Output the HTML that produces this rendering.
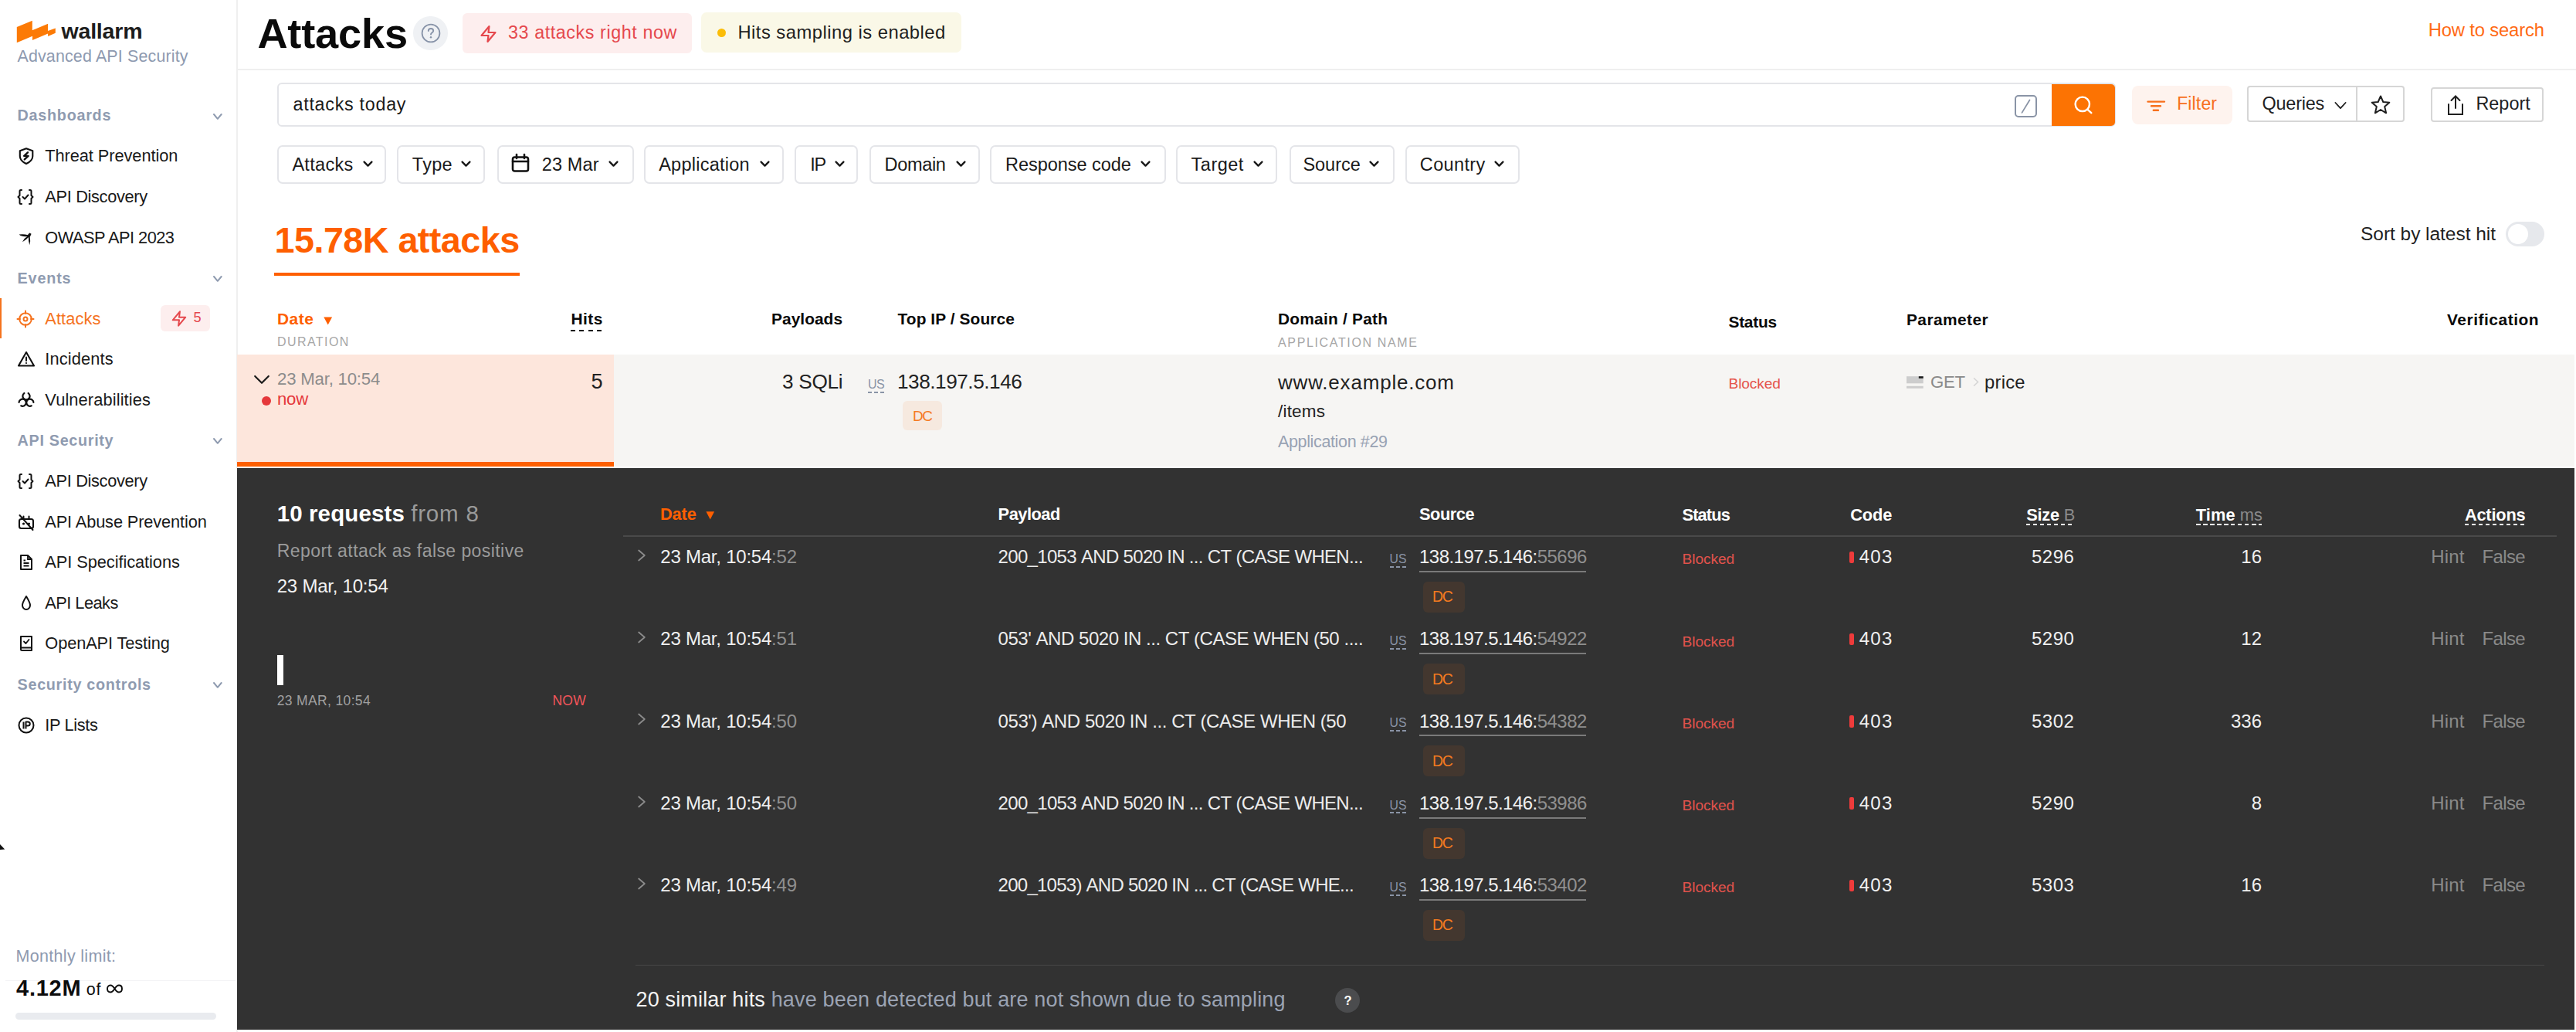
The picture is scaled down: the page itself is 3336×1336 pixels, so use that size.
<!DOCTYPE html>
<html><head><meta charset="utf-8"><title>Attacks</title>
<style>
html,body{margin:0;padding:0;}
body{width:3336px;height:1336px;position:relative;overflow:hidden;background:#ffffff;font-family:"Liberation Sans",sans-serif;}
.t{position:absolute;line-height:1;white-space:nowrap;}
.r{position:absolute;display:block;}
</style></head><body>
<div class="r" style="left:0.0px;top:0.0px;width:306.0px;height:1336.0px;background:#ffffff;"></div>
<div class="r" style="left:306.0px;top:0.0px;width:1.5px;height:1336.0px;background:#efefef;"></div>
<div class="r" style="left:307.0px;top:89.0px;width:3029.0px;height:1.5px;background:#efefef;"></div>
<svg class="r" style="left:20.0px;top:25.0px;" width="54.0" height="32.0" viewBox="0 0 54 32" fill="none"><polygon fill="#fc7a05" points="1.8,10.1 21.8,1.8 21.8,14.2 42.1,5.7 42.1,15 51.8,11.5 51.8,17.7 42.1,21.9 42.1,18.4 22,27 22,21.7 1.8,30.3"/></svg>
<div class="t" id="t0" style="left:79.5px;top:26.3px;font-size:28.5px;color:#1d1d1d;font-weight:700;letter-spacing:-0.190px;">wallarm</div>
<div class="t" id="t1" style="left:22.5px;top:62.5px;font-size:21.4px;color:#8e9ab0;letter-spacing:0.170px;">Advanced API Security</div>
<div class="t" id="t2" style="left:22.6px;top:140.4px;font-size:19.8px;color:#8f9bb0;font-weight:700;letter-spacing:0.719px;">Dashboards</div>
<svg class="r" style="left:275.4px;top:145.5px;" width="13.7" height="9.8" viewBox="0 0 13.7 9.8" fill="none"><polyline points="2,2 6.85,7.8 11.7,2" stroke="#8f9bb0" stroke-width="2" stroke-linecap="round" stroke-linejoin="round"/></svg>
<div class="t" id="t3" style="left:22.6px;top:350.8px;font-size:19.8px;color:#8f9bb0;font-weight:700;letter-spacing:0.824px;">Events</div>
<svg class="r" style="left:275.4px;top:355.9px;" width="13.7" height="9.8" viewBox="0 0 13.7 9.8" fill="none"><polyline points="2,2 6.85,7.8 11.7,2" stroke="#8f9bb0" stroke-width="2" stroke-linecap="round" stroke-linejoin="round"/></svg>
<div class="t" id="t4" style="left:22.6px;top:561.2px;font-size:19.8px;color:#8f9bb0;font-weight:700;letter-spacing:0.678px;">API Security</div>
<svg class="r" style="left:275.4px;top:566.2px;" width="13.7" height="9.8" viewBox="0 0 13.7 9.8" fill="none"><polyline points="2,2 6.85,7.8 11.7,2" stroke="#8f9bb0" stroke-width="2" stroke-linecap="round" stroke-linejoin="round"/></svg>
<div class="t" id="t5" style="left:22.6px;top:876.7px;font-size:19.8px;color:#8f9bb0;font-weight:700;letter-spacing:0.682px;">Security controls</div>
<svg class="r" style="left:275.4px;top:881.8px;" width="13.7" height="9.8" viewBox="0 0 13.7 9.8" fill="none"><polyline points="2,2 6.85,7.8 11.7,2" stroke="#8f9bb0" stroke-width="2" stroke-linecap="round" stroke-linejoin="round"/></svg>
<div class="t" id="t6" style="left:58.3px;top:191.3px;font-size:21.8px;color:#1a1a1a;letter-spacing:-0.073px;">Threat Prevention</div>
<div class="t" id="t7" style="left:58.3px;top:243.9px;font-size:21.8px;color:#1a1a1a;letter-spacing:-0.340px;">API Discovery</div>
<div class="t" id="t8" style="left:58.3px;top:296.5px;font-size:21.8px;color:#1a1a1a;letter-spacing:-0.522px;">OWASP API 2023</div>
<div class="t" id="t9" style="left:58.3px;top:401.7px;font-size:21.8px;color:#f5731e;letter-spacing:0.087px;">Attacks</div>
<div class="t" id="t10" style="left:58.3px;top:454.3px;font-size:21.8px;color:#1a1a1a;letter-spacing:0.144px;">Incidents</div>
<div class="t" id="t11" style="left:58.3px;top:506.9px;font-size:21.8px;color:#1a1a1a;letter-spacing:0.121px;">Vulnerabilities</div>
<div class="t" id="t12" style="left:58.3px;top:612.1px;font-size:21.8px;color:#1a1a1a;letter-spacing:-0.340px;">API Discovery</div>
<div class="t" id="t13" style="left:58.3px;top:664.6px;font-size:21.8px;color:#1a1a1a;letter-spacing:-0.135px;">API Abuse Prevention</div>
<div class="t" id="t14" style="left:58.3px;top:717.2px;font-size:21.8px;color:#1a1a1a;letter-spacing:-0.064px;">API Specifications</div>
<div class="t" id="t15" style="left:58.3px;top:769.8px;font-size:21.8px;color:#1a1a1a;letter-spacing:-0.545px;">API Leaks</div>
<div class="t" id="t16" style="left:58.3px;top:822.4px;font-size:21.8px;color:#1a1a1a;letter-spacing:-0.113px;">OpenAPI Testing</div>
<div class="t" id="t17" style="left:58.3px;top:927.6px;font-size:21.8px;color:#1a1a1a;letter-spacing:-0.353px;">IP Lists</div>
<div class="r" style="left:0.0px;top:385.9px;width:1.5px;height:52.2px;background:#f5731e;"></div>
<div class="r" style="left:208.0px;top:394.7px;width:63.8px;height:34.4px;background:#fdeeee;border-radius:6px;"></div>
<svg class="r" style="left:220.5px;top:400.5px;" width="22.0" height="23.0" viewBox="0 0 24 24" fill="none"><path d="M13 2 L3 14 H12 L11 22 L21 10 H12 Z" stroke="#e5484d" stroke-width="2.2" stroke-linejoin="round"/></svg>
<div class="t" id="t18" style="left:250.4px;top:402.3px;font-size:18.2px;color:#e5484d;">5</div>
<svg class="r" style="left:21.5px;top:190.3px;" width="24.0" height="24.0" viewBox="0 0 24 24" fill="none"><path d="M12 2.3 L20.3 5.3 V12.3 C20.3 16.8 16.8 19.8 12 22 C7.2 19.8 3.8 16.8 3.8 12.3 V5.3 Z" stroke="#111" stroke-width="2.1" stroke-linejoin="round"/><path d="M14 7.3 L9.2 11.9 H14.6 L9.8 16.4" stroke="#111" stroke-width="2.4" stroke-linecap="round" stroke-linejoin="round"/></svg>
<svg class="r" style="left:21.0px;top:242.9px;" width="24.0" height="24.0" viewBox="0 0 24 24" fill="none"><path d="M7 3 H6 C5 3 4.5 3.5 4.5 4.5 V10 L2.5 12 L4.5 14 V19.5 C4.5 20.5 5 21 6 21 H7 M17 3 H18 C19 3 19.5 3.5 19.5 4.5 V10 L21.5 12 L19.5 14 V19.5 C19.5 20.5 19 21 18 21 H17" stroke="#111" stroke-width="2" stroke-linecap="round" stroke-linejoin="round"/><path d="M8.5 12 L11 14.5 L15.5 9.5" stroke="#111" stroke-width="2" stroke-linecap="round" stroke-linejoin="round"/></svg>
<svg class="r" style="left:21.0px;top:611.0px;" width="24.0" height="24.0" viewBox="0 0 24 24" fill="none"><path d="M7 3 H6 C5 3 4.5 3.5 4.5 4.5 V10 L2.5 12 L4.5 14 V19.5 C4.5 20.5 5 21 6 21 H7 M17 3 H18 C19 3 19.5 3.5 19.5 4.5 V10 L21.5 12 L19.5 14 V19.5 C19.5 20.5 19 21 18 21 H17" stroke="#111" stroke-width="2" stroke-linecap="round" stroke-linejoin="round"/><path d="M8.5 12 L11 14.5 L15.5 9.5" stroke="#111" stroke-width="2" stroke-linecap="round" stroke-linejoin="round"/></svg>
<svg class="r" style="left:21.0px;top:295.5px;" width="24.0" height="24.0" viewBox="0 0 24 24" fill="none"><g fill="#111"><path d="M15.3 8.2 Q9.5 6.6 3.6 7.5 Q7.5 11.2 15.3 10 Z"/><path d="M15.2 9.2 Q10.5 12 8 17.2 Q13 14.8 16.5 10.6 Z"/><path d="M15.8 10 Q15.6 16 17.3 21.2 Q18.8 15.5 17.6 10 Z"/><path d="M14.8 8.3 L17.2 5.6 L19.6 6.8 L17.9 10.4 L15.2 10.4 Z"/></g></svg>
<svg class="r" style="left:21.3px;top:400.7px;" width="24.0" height="24.0" viewBox="0 0 24 24" fill="none"><circle cx="12" cy="12" r="7.8" stroke="#f5731e" stroke-width="2"/><circle cx="12" cy="12" r="2.5" stroke="#f5731e" stroke-width="2"/><path d="M12 1.5 V5 M12 19 V22.5 M1.5 12 H5 M19 12 H22.5" stroke="#f5731e" stroke-width="2" stroke-linecap="round"/></svg>
<svg class="r" style="left:21.5px;top:453.2px;" width="24.0" height="24.0" viewBox="0 0 24 24" fill="none"><path d="M12 3 L22 20.5 H2 Z" stroke="#111" stroke-width="2.1" stroke-linejoin="round"/><path d="M12 9.5 V14" stroke="#111" stroke-width="2" stroke-linecap="round"/><circle cx="12" cy="17" r="1.1" fill="#111"/></svg>
<svg class="r" style="left:21.5px;top:505.8px;" width="24.0" height="24.0" viewBox="0 0 24 24" fill="none"><g stroke="#111" stroke-width="2.2" stroke-linecap="round"><path d="M14.64 3.03 A4.6 4.6 0 1 1 9.36 3.03"/><path d="M14.64 3.03 A4.6 4.6 0 1 1 9.36 3.03" transform="rotate(120 12 12.4)"/><path d="M14.64 3.03 A4.6 4.6 0 1 1 9.36 3.03" transform="rotate(240 12 12.4)"/></g></svg>
<svg class="r" style="left:21.5px;top:663.6px;" width="24.0" height="24.0" viewBox="0 0 24 24" fill="none"><rect x="3" y="8" width="18" height="12" rx="2.5" stroke="#111" stroke-width="2.1"/><path d="M8.5 8 V4.5 M15.5 8 V4.5 M3.5 3 L20.5 22" stroke="#111" stroke-width="2" stroke-linecap="round"/><circle cx="8.5" cy="14" r="1.6" fill="#111"/><circle cx="15.5" cy="14" r="1.6" fill="#111"/></svg>
<svg class="r" style="left:22.0px;top:716.2px;" width="24.0" height="24.0" viewBox="0 0 24 24" fill="none"><path d="M5 3 H14 L19 8 V21 H5 Z" stroke="#111" stroke-width="2" stroke-linejoin="round"/><path d="M14 3 V8 H19 M8.5 13 H15.5 M8.5 16.5 H15.5 M8.5 9.5 H11" stroke="#111" stroke-width="1.8"/></svg>
<svg class="r" style="left:21.5px;top:768.8px;" width="24.0" height="24.0" viewBox="0 0 24 24" fill="none"><path d="M12 3 C9 8 7 11 7 14.5 C7 17.5 9.2 20 12 20 C14.8 20 17 17.5 17 14.5 C17 11 15 8 12 3 Z" stroke="#111" stroke-width="2" stroke-linejoin="round"/></svg>
<svg class="r" style="left:22.0px;top:821.4px;" width="24.0" height="24.0" viewBox="0 0 24 24" fill="none"><path d="M5 3 H19 V21 H6.5 C5.5 21 5 20.5 5 19.5 Z M5 17.5 H19" stroke="#111" stroke-width="2" stroke-linejoin="round"/><path d="M9 9.5 L11.5 12 L15.5 7" stroke="#111" stroke-width="1.8" stroke-linecap="round" stroke-linejoin="round"/></svg>
<svg class="r" style="left:21.5px;top:926.5px;" width="24.0" height="24.0" viewBox="0 0 24 24" fill="none"><circle cx="12" cy="12" r="9.5" stroke="#111" stroke-width="2"/><path d="M8.5 7.5 V16.5 M11.5 16.5 V7.5 H14 C15.8 7.5 16.8 8.6 16.8 10 C16.8 11.5 15.8 12.5 14 12.5 H11.5" stroke="#111" stroke-width="2" stroke-linejoin="round"/></svg>
<div class="t" id="t19" style="left:20.5px;top:1227.8px;font-size:21.5px;color:#8e9ab0;letter-spacing:0.312px;">Monthly limit:</div>
<div class="r" style="left:6.5px;top:1269.3px;width:298.0px;height:1.0px;background:#f3f3f5;"></div>
<div class="t" id="t20" style="left:21.0px;top:1264.5px;font-size:29.0px;color:#0d0d0d;font-weight:700;letter-spacing:0.748px;">4.12M</div>
<div class="t" id="t21" style="left:111.7px;top:1270.8px;font-size:21.5px;color:#0d0d0d;letter-spacing:0.957px;">of</div>
<svg class="r" style="left:137.0px;top:1272.0px;" width="23.0" height="16.0" viewBox="0 0 23 16" fill="none"><path d="M11.5 8 C9 4 7.5 3.5 6 3.5 C3.5 3.5 2 5.5 2 8 C2 10.5 3.5 12.5 6 12.5 C7.5 12.5 9 12 11.5 8 C14 4 15.5 3.5 17 3.5 C19.5 3.5 21 5.5 21 8 C21 10.5 19.5 12.5 17 12.5 C15.5 12.5 14 12 11.5 8 Z" stroke="#0d0d0d" stroke-width="1.9"/></svg>
<div class="r" style="left:20.0px;top:1311.0px;width:260.0px;height:9.0px;background:#e9ebef;border-radius:5px;"></div>
<svg class="r" style="left:0.0px;top:1090.0px;" width="8.0" height="12.0" viewBox="0 0 8 12" fill="none"><path d="M0 3 L6.2 9.6 L0 9.9 Z" fill="#111"/></svg>
<div class="t" id="t22" style="left:333.4px;top:16.1px;font-size:54.2px;color:#0a0a0a;font-weight:700;letter-spacing:-0.164px;">Attacks</div>
<div class="r" style="left:535.3px;top:20.8px;width:44.4px;height:44.4px;background:#eff1f4;border-radius:50%;"></div>
<svg class="r" style="left:543.5px;top:29.0px;" width="28.0" height="28.0" viewBox="0 0 28 28" fill="none"><circle cx="14" cy="14" r="11.4" stroke="#8793a8" stroke-width="1.8"/><path d="M10.8 11 C10.8 9 12.3 8 14 8 C15.8 8 17.2 9.2 17.2 10.9 C17.2 13.2 14 13.4 14 15.6" stroke="#8793a8" stroke-width="1.9" stroke-linecap="round"/><circle cx="14" cy="19.3" r="1.2" fill="#8793a8"/></svg>
<div class="r" style="left:599.0px;top:17.0px;width:296.6px;height:51.5px;background:#fdeeee;border-radius:6px;"></div>
<svg class="r" style="left:619.5px;top:31.5px;" width="25.0" height="24.0" viewBox="0 0 24 24" fill="none"><path d="M13 2 L3 14 H12 L11 22 L21 10 H12 Z" stroke="#e5484d" stroke-width="2.2" stroke-linejoin="round"/></svg>
<div class="t" id="t23" style="left:658.0px;top:31.1px;font-size:23.3px;color:#e5484d;letter-spacing:0.584px;">33 attacks right now</div>
<div class="r" style="left:907.8px;top:15.7px;width:336.8px;height:52.8px;background:#faf8e7;border-radius:7px;"></div>
<div class="r" style="left:929.1px;top:37.0px;width:11.0px;height:11.0px;background:#fbbd08;border-radius:50%;"></div>
<div class="t" id="t24" style="left:955.4px;top:29.7px;font-size:23.8px;color:#1e1e1e;letter-spacing:0.477px;">Hits sampling is enabled</div>
<div class="t" id="t25" style="left:3144.7px;top:26.8px;font-size:23.8px;color:#ff6a13;letter-spacing:-0.159px;">How to search</div>
<div class="r" style="left:359.4px;top:107.4px;width:2380.9px;height:56.9px;background:#ffffff;box-sizing:border-box;border:2px solid #e4e5e9;border-radius:6px;"></div>
<div class="t" id="t26" style="left:379.5px;top:124.1px;font-size:23.3px;color:#1a1a1a;letter-spacing:0.727px;">attacks today</div>
<div class="r" style="left:2609.3px;top:123.3px;width:29.1px;height:29.2px;background:none;box-sizing:border-box;border:2px solid #8a94a6;border-radius:5px;"></div>
<svg class="r" style="left:2609.3px;top:123.3px;" width="29.1" height="29.2" viewBox="0 0 29.1 29.2" fill="none"><path d="M19.5 6.5 L9.5 22.9" stroke="#8a94a6" stroke-width="1.8" stroke-linecap="round"/></svg>
<div class="r" style="left:2657.0px;top:109.0px;width:82.0px;height:54.0px;background:#fc7303;border-radius:0 5px 5px 0;"></div>
<svg class="r" style="left:2683.0px;top:121.0px;" width="30.0" height="30.0" viewBox="0 0 30 30" fill="none"><circle cx="13.8" cy="13.8" r="9.2" stroke="#fff" stroke-width="2.4"/><path d="M20.5 20.8 L25.3 25.2" stroke="#fff" stroke-width="2.4" stroke-linecap="round"/></svg>
<div class="r" style="left:2761.2px;top:110.9px;width:129.7px;height:49.7px;background:#fef3ee;border-radius:8px;"></div>
<svg class="r" style="left:2779.0px;top:128.0px;" width="27.0" height="18.0" viewBox="0 0 27 18" fill="none"><path d="M2.5 3.6 H24 M7 9.2 H19 M9.8 14.8 H16" stroke="#f7701d" stroke-width="2.4" stroke-linecap="round"/></svg>
<div class="t" id="t27" style="left:2819.2px;top:123.3px;font-size:23.0px;color:#f7701d;letter-spacing:0.135px;">Filter</div>
<div class="r" style="left:2909.6px;top:111.4px;width:204.9px;height:47.1px;background:none;box-sizing:border-box;border:2px solid #d6d6d6;border-radius:4px;"></div>
<div class="r" style="left:3051.2px;top:112.0px;width:2.0px;height:46.0px;background:#d6d6d6;"></div>
<div class="t" id="t28" style="left:2929.6px;top:123.1px;font-size:23.4px;color:#1f1f1f;letter-spacing:-0.218px;">Queries</div>
<svg class="r" style="left:3022.0px;top:130.0px;" width="18.0" height="13.0" viewBox="0 0 18 13" fill="none"><polyline points="2.4,3 9,10.2 15.6,3" stroke="#1f1f1f" stroke-width="1.8" stroke-linecap="round" stroke-linejoin="round"/></svg>
<svg class="r" style="left:3068.8px;top:121.5px;" width="28.0" height="28.0" viewBox="0 0 28 28" fill="none"><path d="M14 2.5 L17.3 10 L25.3 10.7 L19.2 16 L21.1 24.3 L14 20 L6.9 24.3 L8.8 16 L2.7 10.7 L10.7 10 Z" stroke="#1f1f1f" stroke-width="2" stroke-linejoin="round"/></svg>
<div class="r" style="left:3147.5px;top:113.3px;width:146.9px;height:45.2px;background:none;box-sizing:border-box;border:2px solid #d6d6d6;border-radius:4px;"></div>
<svg class="r" style="left:3168.0px;top:122.0px;" width="24.0" height="28.0" viewBox="0 0 24 28" fill="none"><path d="M12 18 V3 M6.5 8 L12 2.5 L17.5 8 M3 13 V26 H21 V13" stroke="#1f1f1f" stroke-width="2" stroke-linecap="round" stroke-linejoin="miter"/></svg>
<div class="t" id="t29" style="left:3206.4px;top:123.1px;font-size:23.4px;color:#1f1f1f;letter-spacing:0.036px;">Report</div>
<div class="r" style="left:359.4px;top:187.7px;width:140.8px;height:50.3px;background:#fff;box-sizing:border-box;border:2px solid #e4e5e9;border-radius:7px;"></div>
<div class="t" id="t30" style="left:378.4px;top:201.5px;font-size:23.5px;color:#1a1a1a;letter-spacing:0.306px;">Attacks</div>
<svg class="r" style="left:468.5px;top:206.0px;" width="15.0" height="13.0" viewBox="0 0 15 13" fill="none"><polyline points="2.6,3.6 7.5,8.6 12.4,3.6" stroke="#1a1a1a" stroke-width="2.4" stroke-linecap="round" stroke-linejoin="round"/></svg>
<div class="r" style="left:513.6px;top:187.7px;width:114.3px;height:50.3px;background:#fff;box-sizing:border-box;border:2px solid #e4e5e9;border-radius:7px;"></div>
<div class="t" id="t31" style="left:533.8px;top:201.5px;font-size:23.5px;color:#1a1a1a;letter-spacing:0.315px;">Type</div>
<svg class="r" style="left:596.0px;top:206.0px;" width="15.0" height="13.0" viewBox="0 0 15 13" fill="none"><polyline points="2.6,3.6 7.5,8.6 12.4,3.6" stroke="#1a1a1a" stroke-width="2.4" stroke-linecap="round" stroke-linejoin="round"/></svg>
<div class="r" style="left:643.6px;top:187.7px;width:177.0px;height:50.3px;background:#fff;box-sizing:border-box;border:2px solid #e4e5e9;border-radius:7px;"></div>
<div class="t" id="t32" style="left:701.8px;top:201.5px;font-size:23.5px;color:#1a1a1a;letter-spacing:0.131px;">23 Mar</div>
<svg class="r" style="left:786.8px;top:206.0px;" width="15.0" height="13.0" viewBox="0 0 15 13" fill="none"><polyline points="2.6,3.6 7.5,8.6 12.4,3.6" stroke="#1a1a1a" stroke-width="2.4" stroke-linecap="round" stroke-linejoin="round"/></svg>
<div class="r" style="left:834.2px;top:187.7px;width:180.5px;height:50.3px;background:#fff;box-sizing:border-box;border:2px solid #e4e5e9;border-radius:7px;"></div>
<div class="t" id="t33" style="left:853.2px;top:201.5px;font-size:23.5px;color:#1a1a1a;letter-spacing:0.253px;">Application</div>
<svg class="r" style="left:983.2px;top:206.0px;" width="15.0" height="13.0" viewBox="0 0 15 13" fill="none"><polyline points="2.6,3.6 7.5,8.6 12.4,3.6" stroke="#1a1a1a" stroke-width="2.4" stroke-linecap="round" stroke-linejoin="round"/></svg>
<div class="r" style="left:1028.5px;top:187.7px;width:82.5px;height:50.3px;background:#fff;box-sizing:border-box;border:2px solid #e4e5e9;border-radius:7px;"></div>
<div class="t" id="t34" style="left:1049.2px;top:201.5px;font-size:23.5px;color:#1a1a1a;letter-spacing:-1.300px;">IP</div>
<svg class="r" style="left:1079.6px;top:206.0px;" width="15.0" height="13.0" viewBox="0 0 15 13" fill="none"><polyline points="2.6,3.6 7.5,8.6 12.4,3.6" stroke="#1a1a1a" stroke-width="2.4" stroke-linecap="round" stroke-linejoin="round"/></svg>
<div class="r" style="left:1126.0px;top:187.7px;width:143.0px;height:50.3px;background:#fff;box-sizing:border-box;border:2px solid #e4e5e9;border-radius:7px;"></div>
<div class="t" id="t35" style="left:1145.5px;top:201.5px;font-size:23.5px;color:#1a1a1a;letter-spacing:-0.316px;">Domain</div>
<svg class="r" style="left:1236.7px;top:206.0px;" width="15.0" height="13.0" viewBox="0 0 15 13" fill="none"><polyline points="2.6,3.6 7.5,8.6 12.4,3.6" stroke="#1a1a1a" stroke-width="2.4" stroke-linecap="round" stroke-linejoin="round"/></svg>
<div class="r" style="left:1282.0px;top:187.7px;width:227.6px;height:50.3px;background:#fff;box-sizing:border-box;border:2px solid #e4e5e9;border-radius:7px;"></div>
<div class="t" id="t36" style="left:1302.0px;top:201.5px;font-size:23.5px;color:#1a1a1a;letter-spacing:-0.043px;">Response code</div>
<svg class="r" style="left:1475.8px;top:206.0px;" width="15.0" height="13.0" viewBox="0 0 15 13" fill="none"><polyline points="2.6,3.6 7.5,8.6 12.4,3.6" stroke="#1a1a1a" stroke-width="2.4" stroke-linecap="round" stroke-linejoin="round"/></svg>
<div class="r" style="left:1523.0px;top:187.7px;width:130.6px;height:50.3px;background:#fff;box-sizing:border-box;border:2px solid #e4e5e9;border-radius:7px;"></div>
<div class="t" id="t37" style="left:1542.6px;top:201.5px;font-size:23.5px;color:#1a1a1a;letter-spacing:0.497px;">Target</div>
<svg class="r" style="left:1622.1px;top:206.0px;" width="15.0" height="13.0" viewBox="0 0 15 13" fill="none"><polyline points="2.6,3.6 7.5,8.6 12.4,3.6" stroke="#1a1a1a" stroke-width="2.4" stroke-linecap="round" stroke-linejoin="round"/></svg>
<div class="r" style="left:1669.6px;top:187.7px;width:136.4px;height:50.3px;background:#fff;box-sizing:border-box;border:2px solid #e4e5e9;border-radius:7px;"></div>
<div class="t" id="t38" style="left:1687.4px;top:201.5px;font-size:23.5px;color:#1a1a1a;letter-spacing:-0.012px;">Source</div>
<svg class="r" style="left:1771.6px;top:206.0px;" width="15.0" height="13.0" viewBox="0 0 15 13" fill="none"><polyline points="2.6,3.6 7.5,8.6 12.4,3.6" stroke="#1a1a1a" stroke-width="2.4" stroke-linecap="round" stroke-linejoin="round"/></svg>
<div class="r" style="left:1820.0px;top:187.7px;width:148.0px;height:50.3px;background:#fff;box-sizing:border-box;border:2px solid #e4e5e9;border-radius:7px;"></div>
<div class="t" id="t39" style="left:1838.8px;top:201.5px;font-size:23.5px;color:#1a1a1a;letter-spacing:0.367px;">Country</div>
<svg class="r" style="left:1933.9px;top:206.0px;" width="15.0" height="13.0" viewBox="0 0 15 13" fill="none"><polyline points="2.6,3.6 7.5,8.6 12.4,3.6" stroke="#1a1a1a" stroke-width="2.4" stroke-linecap="round" stroke-linejoin="round"/></svg>
<svg class="r" style="left:660.0px;top:197.0px;" width="28.0" height="28.0" viewBox="0 0 28 28" fill="none"><rect x="4" y="6.5" width="20" height="18" rx="2.5" stroke="#111" stroke-width="2.6"/><path d="M4 12 H24 M9 3 V8 M19 3 V8" stroke="#111" stroke-width="2.6" stroke-linecap="round"/></svg>
<div class="t" id="t40" style="left:355.6px;top:287.5px;font-size:46.8px;color:#fe5f00;font-weight:700;letter-spacing:-0.585px;">15.78K attacks</div>
<div class="r" style="left:354.7px;top:352.8px;width:318.1px;height:4.1px;background:#fe5f00;"></div>
<div class="t" id="t41" style="left:3057.0px;top:291.1px;font-size:24.5px;color:#1f1f1f;letter-spacing:-0.040px;">Sort by latest hit</div>
<div class="r" style="left:3244.8px;top:287.0px;width:50.2px;height:32.0px;background:#e6e8ec;border-radius:16px;"></div>
<div class="r" style="left:3247.5px;top:290.2px;width:26.0px;height:26.0px;background:#ffffff;border-radius:50%;"></div>
<div class="t" id="t42" style="left:359.0px;top:403.3px;font-size:20.9px;color:#fe5f00;font-weight:700;letter-spacing:0.506px;">Date</div>
<svg class="r" style="left:417.5px;top:408.5px;" width="13.5" height="13.0" viewBox="0 0 13.5 13" fill="none"><polygon points="1.3,1.4 12.1,1.4 6.7,11.5" fill="#fe5f00"/></svg>
<div class="t" id="t43" style="left:359.0px;top:435.0px;font-size:16.0px;color:#a6a6a6;letter-spacing:1.431px;">DURATION</div>
<div class="t" id="t44" style="left:739.4px;top:403.3px;font-size:20.9px;color:#0a0a0a;font-weight:700;letter-spacing:0.507px;">Hits</div>
<div class="r" style="left:739.4px;top:426.7px;width:40.0px;height:2.0px;background:none;background:repeating-linear-gradient(90deg,#0a0a0a 0 6px,transparent 6px 11.3px);"></div>
<div class="t" id="t45" style="left:999.0px;top:403.3px;font-size:20.9px;color:#0a0a0a;font-weight:700;letter-spacing:0.038px;">Payloads</div>
<div class="t" id="t46" style="left:1162.5px;top:403.3px;font-size:20.9px;color:#0a0a0a;font-weight:700;letter-spacing:0.083px;">Top IP / Source</div>
<div class="t" id="t47" style="left:1655.0px;top:403.1px;font-size:20.9px;color:#0a0a0a;font-weight:700;letter-spacing:0.225px;">Domain / Path</div>
<div class="t" id="t48" style="left:1655.0px;top:435.5px;font-size:16.0px;color:#a6a6a6;letter-spacing:1.647px;">APPLICATION NAME</div>
<div class="t" id="t49" style="left:2238.5px;top:407.0px;font-size:20.9px;color:#0a0a0a;font-weight:700;letter-spacing:-0.270px;">Status</div>
<div class="t" id="t50" style="left:2469.0px;top:403.8px;font-size:20.9px;color:#0a0a0a;font-weight:700;letter-spacing:0.437px;">Parameter</div>
<div class="t" id="t51" style="left:3169.0px;top:403.8px;font-size:20.9px;color:#0a0a0a;font-weight:700;letter-spacing:0.543px;">Verification</div>
<div class="r" style="left:307.0px;top:459.0px;width:3027.0px;height:145.4px;background:#f6f5f3;"></div>
<div class="r" style="left:307.0px;top:459.0px;width:487.6px;height:139.2px;background:#fde6dc;"></div>
<div class="r" style="left:307.0px;top:598.2px;width:487.6px;height:6.2px;background:#fe5f00;"></div>
<svg class="r" style="left:327.0px;top:482.5px;" width="24.0" height="18.0" viewBox="0 0 24 18" fill="none"><polyline points="3.2,4 12,12.8 20.8,4" stroke="#1a1a1a" stroke-width="2.2" stroke-linecap="round" stroke-linejoin="round"/></svg>
<div class="t" id="t52" style="left:359.0px;top:480.3px;font-size:22.2px;color:#8c8c8c;letter-spacing:-0.200px;">23 Mar, 10:54</div>
<div class="r" style="left:338.8px;top:513.0px;width:12.0px;height:12.0px;background:#e5383b;border-radius:50%;"></div>
<div class="t" id="t53" style="left:359.0px;top:506.1px;font-size:22.2px;color:#e5383b;letter-spacing:-0.253px;">now</div>
<div class="t" id="t54" style="left:765.6px;top:480.1px;font-size:27.2px;color:#222;">5</div>
<div class="t" id="t55" style="left:1013.0px;top:480.9px;font-size:26.2px;color:#222;letter-spacing:-0.292px;">3 SQLi</div>
<div class="t" id="t56" style="left:1123.9px;top:489.6px;font-size:16.0px;color:#8a94a6;letter-spacing:-0.538px;">US</div>
<div class="r" style="left:1123.9px;top:506.7px;width:20.7px;height:2.0px;background:none;background:repeating-linear-gradient(90deg,#8a94a6 0 5px,transparent 5px 8px);"></div>
<div class="t" id="t57" style="left:1162.0px;top:480.9px;font-size:26.2px;color:#222;letter-spacing:-0.473px;">138.197.5.146</div>
<div class="r" style="left:1169.3px;top:519.4px;width:51.2px;height:37.3px;background:#f6e9df;border-radius:6px;"></div>
<div class="t" id="t58" style="left:1181.9px;top:529.1px;font-size:19.0px;color:#f57a22;letter-spacing:-1.300px;">DC</div>
<div class="t" id="t59" style="left:1655.0px;top:481.5px;font-size:26.0px;color:#222;letter-spacing:0.805px;">www.example.com</div>
<div class="t" id="t60" style="left:1655.0px;top:522.0px;font-size:22.5px;color:#222;letter-spacing:0.196px;">/items</div>
<div class="t" id="t61" style="left:1655.0px;top:561.8px;font-size:21.5px;color:#98a2b3;letter-spacing:-0.359px;">Application #29</div>
<div class="t" id="t62" style="left:2238.5px;top:487.2px;font-size:19.2px;color:#e5534b;letter-spacing:-0.127px;">Blocked</div>
<svg class="r" style="left:2469.0px;top:487.0px;" width="22.0" height="16.0" viewBox="0 0 22 16" fill="none"><rect x="0" y="0.2" width="21.7" height="9.1" fill="#cdcdcd"/><rect x="15.8" y="0.2" width="5.9" height="2.6" fill="#1a1a1a"/><rect x="0" y="12.8" width="21.7" height="3" fill="#cdcdcd"/></svg>
<div class="t" id="t63" style="left:2500.0px;top:484.3px;font-size:22.2px;color:#8a8a8a;letter-spacing:-0.307px;">GET</div>
<svg class="r" style="left:2554.0px;top:487.5px;" width="10.0" height="13.0" viewBox="0 0 10 13" fill="none"><polyline points="2.5,1.8 7.5,6.5 2.5,11.2" stroke="#d4d4d4" stroke-width="1.5" stroke-linecap="round"/></svg>
<div class="t" id="t64" style="left:2570.0px;top:483.2px;font-size:23.8px;color:#222;letter-spacing:0.253px;">price</div>
<div class="r" style="left:307.0px;top:605.5px;width:3026.5px;height:727.5px;background:#323232;"></div>
<div class="t" id="t65" style="left:358.7px;top:649.6px;font-size:29.5px;color:#ffffff;font-weight:700;letter-spacing:0.112px;">10 requests</div>
<div class="t" id="t66" style="left:532.3px;top:649.6px;font-size:29.5px;color:#9a9a9a;letter-spacing:0.779px;">from 8</div>
<div class="t" id="t67" style="left:358.7px;top:701.5px;font-size:23.0px;color:#9b9b9b;letter-spacing:0.429px;">Report attack as false positive</div>
<div class="t" id="t68" style="left:358.7px;top:746.9px;font-size:24.0px;color:#f2f2f2;letter-spacing:-0.223px;">23 Mar, 10:54</div>
<div class="r" style="left:358.7px;top:847.5px;width:8.4px;height:39.0px;background:#ffffff;"></div>
<div class="t" id="t69" style="left:358.7px;top:898.9px;font-size:17.5px;color:#a0a0a0;letter-spacing:0.355px;">23 MAR, 10:54</div>
<div class="t" id="t70" style="left:715.4px;top:898.9px;font-size:17.5px;color:#f2555a;letter-spacing:0.309px;">NOW</div>
<div class="t" id="t71" style="left:854.9px;top:654.5px;font-size:21.8px;color:#fe5f00;font-weight:700;letter-spacing:-0.085px;">Date</div>
<svg class="r" style="left:913.0px;top:660.5px;" width="13.5" height="13.0" viewBox="0 0 13.5 13" fill="none"><polygon points="1.4,1.2 12.1,1.2 6.75,11.5" fill="#fe5f00"/></svg>
<div class="t" id="t72" style="left:1292.6px;top:655.0px;font-size:21.8px;color:#ffffff;font-weight:700;letter-spacing:-0.482px;">Payload</div>
<div class="t" id="t73" style="left:1838.0px;top:655.0px;font-size:21.8px;color:#ffffff;font-weight:700;letter-spacing:-0.461px;">Source</div>
<div class="t" id="t74" style="left:2178.5px;top:655.8px;font-size:21.8px;color:#ffffff;font-weight:700;letter-spacing:-0.864px;">Status</div>
<div class="t" id="t75" style="left:2396.3px;top:655.8px;font-size:21.8px;color:#ffffff;font-weight:700;letter-spacing:-0.165px;">Code</div>
<div class="t" id="t76" style="left:2624.2px;top:655.8px;font-size:21.8px;color:#ffffff;font-weight:700;letter-spacing:-0.205px;">Size <span style="color:#8a8a8a;font-weight:400">B</span></div>
<div class="r" style="left:2624.2px;top:678.0px;width:62.2px;height:2.0px;background:none;background:repeating-linear-gradient(90deg,#fff 0 5.5px,transparent 5.5px 9px);"></div>
<div class="t" id="t77" style="left:2843.8px;top:655.8px;font-size:21.8px;color:#ffffff;font-weight:700;letter-spacing:0.098px;">Time <span style="color:#8a8a8a;font-weight:400">ms</span></div>
<div class="r" style="left:2843.8px;top:678.0px;width:85.2px;height:2.0px;background:none;background:repeating-linear-gradient(90deg,#fff 0 5.5px,transparent 5.5px 9px);"></div>
<div class="t" id="t78" style="left:3191.9px;top:655.8px;font-size:21.8px;color:#ffffff;font-weight:700;letter-spacing:-0.190px;">Actions</div>
<div class="r" style="left:3191.9px;top:678.0px;width:77.8px;height:2.0px;background:none;background:repeating-linear-gradient(90deg,#fff 0 5.5px,transparent 5.5px 9px);"></div>
<div class="r" style="left:807.2px;top:693.3px;width:2503.8px;height:2.0px;background:#4a4a4a;"></div>
<svg class="r" style="left:824.0px;top:709.8px;" width="14.0" height="18.0" viewBox="0 0 14 18" fill="none"><polyline points="3.2,2.5 10.8,9 3.2,15.5" stroke="#8c8c8c" stroke-width="1.8" stroke-linecap="round" stroke-linejoin="round"/></svg>
<div class="t" id="t79" style="left:855.3px;top:709.0px;font-size:24.0px;color:#f0f0f0;letter-spacing:-0.230px;">23 Mar, 10:54<span style="color:#8f8f8f">:52</span></div>
<div class="t" id="t80" style="left:1292.6px;top:709.0px;font-size:24.0px;color:#ececec;letter-spacing:-0.678px;">200_1053&nbsp;AND&nbsp;5020&nbsp;IN&nbsp;...&nbsp;CT&nbsp;(CASE&nbsp;WHEN...</div>
<div class="t" id="t81" style="left:1799.6px;top:715.9px;font-size:15.8px;color:#8a94a6;letter-spacing:0.047px;">US</div>
<div class="r" style="left:1799.6px;top:732.5px;width:21.0px;height:2.0px;background:none;background:repeating-linear-gradient(90deg,#8a94a6 0 5px,transparent 5px 8px);"></div>
<div class="t" id="t82" style="left:1838.0px;top:709.0px;font-size:24.0px;color:#f0f0f0;letter-spacing:-0.534px;">138.197.5.146:<span style="color:#8f8f8f">55696</span></div>
<div class="r" style="left:1838.0px;top:738.8px;width:216.3px;height:2.0px;background:#7a7a7a;"></div>
<div class="r" style="left:1843.0px;top:752.8px;width:54.0px;height:40.2px;background:#43372f;border-radius:6px;"></div>
<div class="t" id="t83" style="left:1855.0px;top:763.3px;font-size:19.5px;color:#f47a20;letter-spacing:-1.300px;">DC</div>
<div class="t" id="t84" style="left:2178.5px;top:714.2px;font-size:19.2px;color:#e0524c;letter-spacing:-0.079px;">Blocked</div>
<div class="r" style="left:2395.0px;top:713.5px;width:6.4px;height:15.6px;background:#ee3b3b;border-radius:2px;"></div>
<div class="t" id="t85" style="left:2407.8px;top:709.0px;font-size:24.0px;color:#f0f0f0;letter-spacing:1.225px;">403</div>
<div class="t" id="t86" style="left:2686.4px;top:709.0px;font-size:24.0px;color:#f0f0f0;letter-spacing:0.502px;transform:translateX(-100%);">5296</div>
<div class="t" id="t87" style="left:2929.0px;top:709.0px;font-size:24.0px;color:#f0f0f0;transform:translateX(-100%);">16</div>
<div class="t" id="t88" style="left:3148.2px;top:709.0px;font-size:24.0px;color:#8a8a8a;letter-spacing:0.205px;">Hint</div>
<div class="t" id="t89" style="left:3214.5px;top:709.0px;font-size:24.0px;color:#8a8a8a;letter-spacing:-0.622px;">False</div>
<svg class="r" style="left:824.0px;top:816.0px;" width="14.0" height="18.0" viewBox="0 0 14 18" fill="none"><polyline points="3.2,2.5 10.8,9 3.2,15.5" stroke="#8c8c8c" stroke-width="1.8" stroke-linecap="round" stroke-linejoin="round"/></svg>
<div class="t" id="t90" style="left:855.3px;top:815.2px;font-size:24.0px;color:#f0f0f0;letter-spacing:-0.230px;">23 Mar, 10:54<span style="color:#8f8f8f">:51</span></div>
<div class="t" id="t91" style="left:1292.6px;top:815.2px;font-size:24.0px;color:#ececec;letter-spacing:-0.467px;">053'&nbsp;AND&nbsp;5020&nbsp;IN&nbsp;...&nbsp;CT&nbsp;(CASE&nbsp;WHEN&nbsp;(50&nbsp;....</div>
<div class="t" id="t92" style="left:1799.6px;top:822.2px;font-size:15.8px;color:#8a94a6;letter-spacing:0.047px;">US</div>
<div class="r" style="left:1799.6px;top:838.8px;width:21.0px;height:2.0px;background:none;background:repeating-linear-gradient(90deg,#8a94a6 0 5px,transparent 5px 8px);"></div>
<div class="t" id="t93" style="left:1838.0px;top:815.2px;font-size:24.0px;color:#f0f0f0;letter-spacing:-0.534px;">138.197.5.146:<span style="color:#8f8f8f">54922</span></div>
<div class="r" style="left:1838.0px;top:845.0px;width:216.3px;height:2.0px;background:#7a7a7a;"></div>
<div class="r" style="left:1843.0px;top:859.0px;width:54.0px;height:40.2px;background:#43372f;border-radius:6px;"></div>
<div class="t" id="t94" style="left:1855.0px;top:869.5px;font-size:19.5px;color:#f47a20;letter-spacing:-1.300px;">DC</div>
<div class="t" id="t95" style="left:2178.5px;top:820.5px;font-size:19.2px;color:#e0524c;letter-spacing:-0.079px;">Blocked</div>
<div class="r" style="left:2395.0px;top:819.8px;width:6.4px;height:15.6px;background:#ee3b3b;border-radius:2px;"></div>
<div class="t" id="t96" style="left:2407.8px;top:815.2px;font-size:24.0px;color:#f0f0f0;letter-spacing:1.225px;">403</div>
<div class="t" id="t97" style="left:2686.4px;top:815.2px;font-size:24.0px;color:#f0f0f0;letter-spacing:0.502px;transform:translateX(-100%);">5290</div>
<div class="t" id="t98" style="left:2929.0px;top:815.2px;font-size:24.0px;color:#f0f0f0;transform:translateX(-100%);">12</div>
<div class="t" id="t99" style="left:3148.2px;top:815.2px;font-size:24.0px;color:#8a8a8a;letter-spacing:0.205px;">Hint</div>
<div class="t" id="t100" style="left:3214.5px;top:815.2px;font-size:24.0px;color:#8a8a8a;letter-spacing:-0.622px;">False</div>
<svg class="r" style="left:824.0px;top:922.3px;" width="14.0" height="18.0" viewBox="0 0 14 18" fill="none"><polyline points="3.2,2.5 10.8,9 3.2,15.5" stroke="#8c8c8c" stroke-width="1.8" stroke-linecap="round" stroke-linejoin="round"/></svg>
<div class="t" id="t101" style="left:855.3px;top:921.5px;font-size:24.0px;color:#f0f0f0;letter-spacing:-0.230px;">23 Mar, 10:54<span style="color:#8f8f8f">:50</span></div>
<div class="t" id="t102" style="left:1292.6px;top:921.5px;font-size:24.0px;color:#ececec;letter-spacing:-0.431px;">053')&nbsp;AND&nbsp;5020&nbsp;IN&nbsp;...&nbsp;CT&nbsp;(CASE&nbsp;WHEN&nbsp;(50</div>
<div class="t" id="t103" style="left:1799.6px;top:928.4px;font-size:15.8px;color:#8a94a6;letter-spacing:0.047px;">US</div>
<div class="r" style="left:1799.6px;top:945.0px;width:21.0px;height:2.0px;background:none;background:repeating-linear-gradient(90deg,#8a94a6 0 5px,transparent 5px 8px);"></div>
<div class="t" id="t104" style="left:1838.0px;top:921.5px;font-size:24.0px;color:#f0f0f0;letter-spacing:-0.534px;">138.197.5.146:<span style="color:#8f8f8f">54382</span></div>
<div class="r" style="left:1838.0px;top:951.3px;width:216.3px;height:2.0px;background:#7a7a7a;"></div>
<div class="r" style="left:1843.0px;top:965.3px;width:54.0px;height:40.2px;background:#43372f;border-radius:6px;"></div>
<div class="t" id="t105" style="left:1855.0px;top:975.8px;font-size:19.5px;color:#f47a20;letter-spacing:-1.300px;">DC</div>
<div class="t" id="t106" style="left:2178.5px;top:926.7px;font-size:19.2px;color:#e0524c;letter-spacing:-0.079px;">Blocked</div>
<div class="r" style="left:2395.0px;top:926.0px;width:6.4px;height:15.6px;background:#ee3b3b;border-radius:2px;"></div>
<div class="t" id="t107" style="left:2407.8px;top:921.5px;font-size:24.0px;color:#f0f0f0;letter-spacing:1.225px;">403</div>
<div class="t" id="t108" style="left:2686.4px;top:921.5px;font-size:24.0px;color:#f0f0f0;letter-spacing:0.502px;transform:translateX(-100%);">5302</div>
<div class="t" id="t109" style="left:2929.0px;top:921.5px;font-size:24.0px;color:#f0f0f0;transform:translateX(-100%);">336</div>
<div class="t" id="t110" style="left:3148.2px;top:921.5px;font-size:24.0px;color:#8a8a8a;letter-spacing:0.205px;">Hint</div>
<div class="t" id="t111" style="left:3214.5px;top:921.5px;font-size:24.0px;color:#8a8a8a;letter-spacing:-0.622px;">False</div>
<svg class="r" style="left:824.0px;top:1028.5px;" width="14.0" height="18.0" viewBox="0 0 14 18" fill="none"><polyline points="3.2,2.5 10.8,9 3.2,15.5" stroke="#8c8c8c" stroke-width="1.8" stroke-linecap="round" stroke-linejoin="round"/></svg>
<div class="t" id="t112" style="left:855.3px;top:1027.7px;font-size:24.0px;color:#f0f0f0;letter-spacing:-0.230px;">23 Mar, 10:54<span style="color:#8f8f8f">:50</span></div>
<div class="t" id="t113" style="left:1292.6px;top:1027.7px;font-size:24.0px;color:#ececec;letter-spacing:-0.678px;">200_1053&nbsp;AND&nbsp;5020&nbsp;IN&nbsp;...&nbsp;CT&nbsp;(CASE&nbsp;WHEN...</div>
<div class="t" id="t114" style="left:1799.6px;top:1034.7px;font-size:15.8px;color:#8a94a6;letter-spacing:0.047px;">US</div>
<div class="r" style="left:1799.6px;top:1051.2px;width:21.0px;height:2.0px;background:none;background:repeating-linear-gradient(90deg,#8a94a6 0 5px,transparent 5px 8px);"></div>
<div class="t" id="t115" style="left:1838.0px;top:1027.7px;font-size:24.0px;color:#f0f0f0;letter-spacing:-0.534px;">138.197.5.146:<span style="color:#8f8f8f">53986</span></div>
<div class="r" style="left:1838.0px;top:1057.5px;width:216.3px;height:2.0px;background:#7a7a7a;"></div>
<div class="r" style="left:1843.0px;top:1071.5px;width:54.0px;height:40.2px;background:#43372f;border-radius:6px;"></div>
<div class="t" id="t116" style="left:1855.0px;top:1082.0px;font-size:19.5px;color:#f47a20;letter-spacing:-1.300px;">DC</div>
<div class="t" id="t117" style="left:2178.5px;top:1033.0px;font-size:19.2px;color:#e0524c;letter-spacing:-0.079px;">Blocked</div>
<div class="r" style="left:2395.0px;top:1032.2px;width:6.4px;height:15.6px;background:#ee3b3b;border-radius:2px;"></div>
<div class="t" id="t118" style="left:2407.8px;top:1027.7px;font-size:24.0px;color:#f0f0f0;letter-spacing:1.225px;">403</div>
<div class="t" id="t119" style="left:2686.4px;top:1027.7px;font-size:24.0px;color:#f0f0f0;letter-spacing:0.502px;transform:translateX(-100%);">5290</div>
<div class="t" id="t120" style="left:2929.0px;top:1027.7px;font-size:24.0px;color:#f0f0f0;transform:translateX(-100%);">8</div>
<div class="t" id="t121" style="left:3148.2px;top:1027.7px;font-size:24.0px;color:#8a8a8a;letter-spacing:0.205px;">Hint</div>
<div class="t" id="t122" style="left:3214.5px;top:1027.7px;font-size:24.0px;color:#8a8a8a;letter-spacing:-0.622px;">False</div>
<svg class="r" style="left:824.0px;top:1134.8px;" width="14.0" height="18.0" viewBox="0 0 14 18" fill="none"><polyline points="3.2,2.5 10.8,9 3.2,15.5" stroke="#8c8c8c" stroke-width="1.8" stroke-linecap="round" stroke-linejoin="round"/></svg>
<div class="t" id="t123" style="left:855.3px;top:1134.0px;font-size:24.0px;color:#f0f0f0;letter-spacing:-0.230px;">23 Mar, 10:54<span style="color:#8f8f8f">:49</span></div>
<div class="t" id="t124" style="left:1292.6px;top:1134.0px;font-size:24.0px;color:#ececec;letter-spacing:-0.747px;">200_1053)&nbsp;AND&nbsp;5020&nbsp;IN&nbsp;...&nbsp;CT&nbsp;(CASE&nbsp;WHE...</div>
<div class="t" id="t125" style="left:1799.6px;top:1140.9px;font-size:15.8px;color:#8a94a6;letter-spacing:0.047px;">US</div>
<div class="r" style="left:1799.6px;top:1157.5px;width:21.0px;height:2.0px;background:none;background:repeating-linear-gradient(90deg,#8a94a6 0 5px,transparent 5px 8px);"></div>
<div class="t" id="t126" style="left:1838.0px;top:1134.0px;font-size:24.0px;color:#f0f0f0;letter-spacing:-0.534px;">138.197.5.146:<span style="color:#8f8f8f">53402</span></div>
<div class="r" style="left:1838.0px;top:1163.8px;width:216.3px;height:2.0px;background:#7a7a7a;"></div>
<div class="r" style="left:1843.0px;top:1177.8px;width:54.0px;height:40.2px;background:#43372f;border-radius:6px;"></div>
<div class="t" id="t127" style="left:1855.0px;top:1188.3px;font-size:19.5px;color:#f47a20;letter-spacing:-1.300px;">DC</div>
<div class="t" id="t128" style="left:2178.5px;top:1139.2px;font-size:19.2px;color:#e0524c;letter-spacing:-0.079px;">Blocked</div>
<div class="r" style="left:2395.0px;top:1138.5px;width:6.4px;height:15.6px;background:#ee3b3b;border-radius:2px;"></div>
<div class="t" id="t129" style="left:2407.8px;top:1134.0px;font-size:24.0px;color:#f0f0f0;letter-spacing:1.225px;">403</div>
<div class="t" id="t130" style="left:2686.4px;top:1134.0px;font-size:24.0px;color:#f0f0f0;letter-spacing:0.502px;transform:translateX(-100%);">5303</div>
<div class="t" id="t131" style="left:2929.0px;top:1134.0px;font-size:24.0px;color:#f0f0f0;transform:translateX(-100%);">16</div>
<div class="t" id="t132" style="left:3148.2px;top:1134.0px;font-size:24.0px;color:#8a8a8a;letter-spacing:0.205px;">Hint</div>
<div class="t" id="t133" style="left:3214.5px;top:1134.0px;font-size:24.0px;color:#8a8a8a;letter-spacing:-0.622px;">False</div>
<div class="r" style="left:822.6px;top:1248.5px;width:2472.4px;height:1.5px;background:#474747;"></div>
<div class="t" id="t134" style="left:823.5px;top:1281.4px;font-size:27.0px;color:#f2f2f2;letter-spacing:0.164px;">20 similar hits <span style="color:#9ba3b3">have been detected but are not shown due to sampling</span></div>
<div class="r" style="left:1729.0px;top:1279.0px;width:32.0px;height:32.0px;background:#4b4c4e;border-radius:50%;"></div>
<div class="t" id="t135" style="left:1740.5px;top:1287.0px;font-size:16.5px;color:#ffffff;font-weight:700;">?</div>
</body></html>
